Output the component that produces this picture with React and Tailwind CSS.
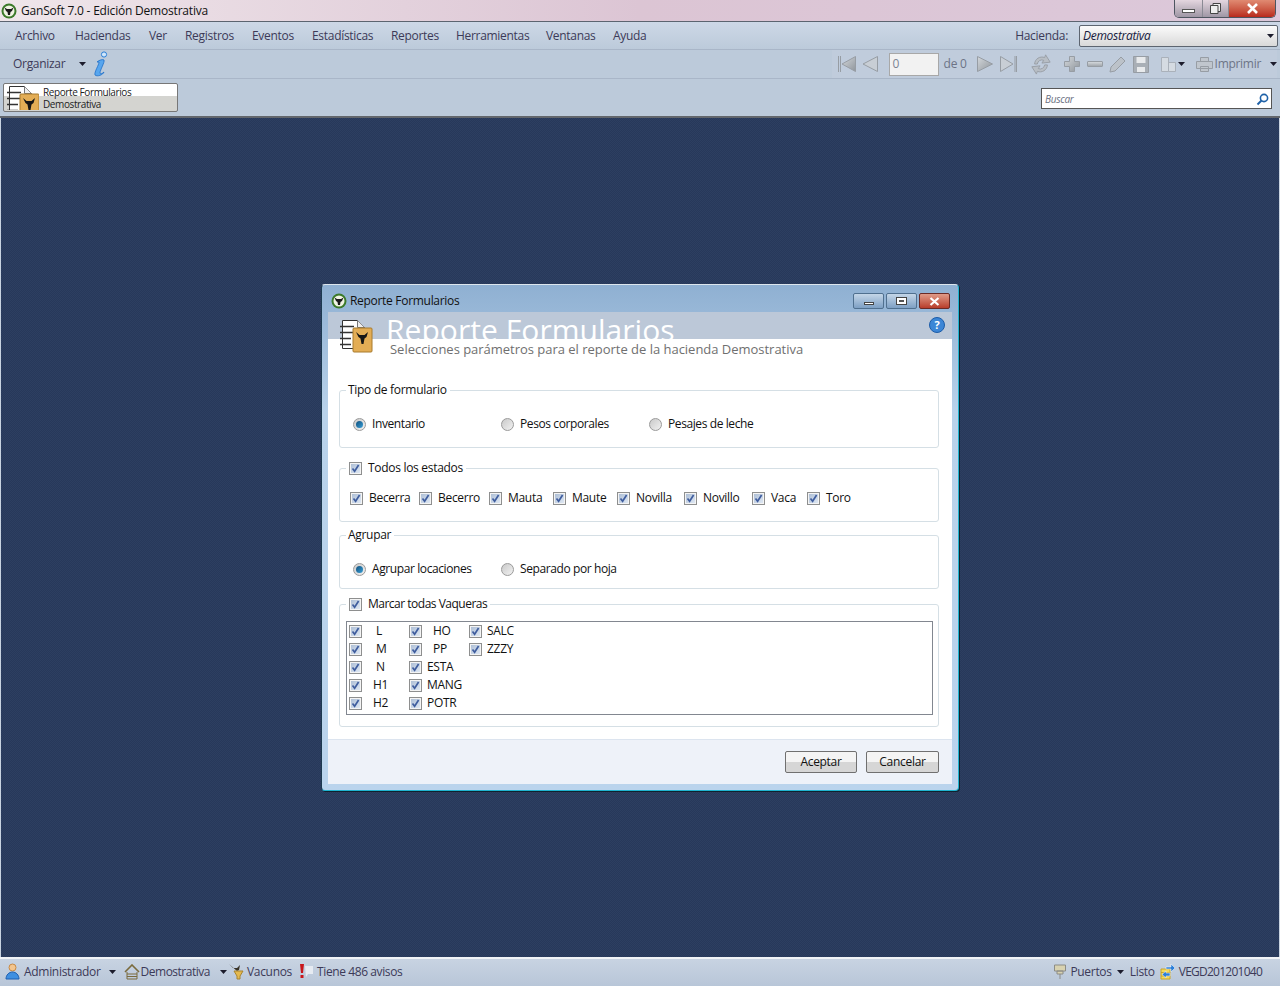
// GanSoft report dialog
import React from 'react';

const Caret = ({ className = '' }) => (
    <svg width="7" height="4" viewBox="0 0 7 4" className={className}><path d="M0 0h7L3.5 4z" fill="#1c1c2c" /></svg>
);

const Logo = ({ size = 16 }) => (
    <svg width={size} height={size} viewBox="0 0 16 16" className="shrink-0">
        <circle cx="8" cy="8" r="7.5" fill="#3c7a2a" />
        <circle cx="8" cy="8" r="5.5" fill="#f1f4e4" />
        <path d="M3.5 4.5 6 6h4l2.5-1.5L11 8l-1.5 1-.5 3H7l-.5-3L5 8z" fill="#1b1b1b" />
    </svg>
);

const ReportIcon = ({ className = '', width = 34, height = 34 }) => (
    <svg width={width} height={height} viewBox={`0 0 ${width} ${height}`} className={className}>
        <path d="M3.5 1.5h15l7 7v21h-22z" fill="#fff" stroke="#333" />
        <path d="M18.5 1.5v7h7" fill="#eee" stroke="#777" />
        <path d="M1 7.5h14M1 13.5h14M1 19.5h11M1 25.5h11" stroke="#333" strokeWidth="1.4" />
        <rect x="14" y="9" width="19" height="24" rx="1" fill="#e3ad55" stroke="#a87a2c" />
        <path d="M17 13 20.5 16h5L29 13l-1.5 5-2 1.5-1 5.5h-2l-1-5.5-2-1.5z" fill="#161616" />
    </svg>
);

const Check = () => (
    <span className="relative flex h-[13px] w-[13px] shrink-0 items-center justify-center border border-[#8e8f8f] bg-[#f4f4f4] p-px">
        <span className="flex h-full w-full items-center justify-center bg-gradient-to-br from-[#aebfd6] to-[#dfe8f3]">
            <svg width="9" height="9" viewBox="0 0 9 9"><path d="M1.5 4.5 3.6 7.2 7.6 1" fill="none" stroke="#3f5d9e" strokeWidth="1.7" /></svg>
        </span>
    </span>
);

const Radio = ({ on = false }) => (
    <span className="flex h-[13px] w-[13px] shrink-0 items-center justify-center rounded-full border border-[#9a9a9a] bg-gradient-to-br from-[#c9c9c9] to-[#f2f2f2]">
        {on && <span className="h-[7px] w-[7px] rounded-full bg-gradient-to-br from-[#0f4f7c] to-[#3aa0d8]" />}
    </span>
);

const stroke = '#979da4';

const Gray = ({ children, w = 17, h = 18, className = '' }) => (
    <svg width={w} height={h} viewBox={`0 0 ${w} ${h}`} className={`shrink-0 ${className}`}>
        <defs>
            <linearGradient id="gr" x1="0" x2="1" y1="0" y2="1">
                <stop offset="0" stopColor="#d4d8dc" />
                <stop offset="1" stopColor="#8f959b" />
            </linearGradient>
        </defs>
        {children}
    </svg>
);

const Group = ({ legend, className = '', children }) => (
    <fieldset className={`rounded-[3px] border border-[#d5dfe5] ${className}`}>
        <legend className="ml-[6px] flex items-center gap-[6px] px-[3px]">{legend}</legend>
        {children}
    </fieldset>
);

const estados = [
    ['Becerra', 'w-[69px]'], ['Becerro', 'w-[70px]'], ['Mauta', 'w-[64px]'], ['Maute', 'w-[64px]'],
    ['Novilla', 'w-[67px]'], ['Novillo', 'w-[68px]'], ['Vaca', 'w-[55px]'], ['Toro', 'w-[55px]'],
];

const vaqueras = [
    ['L', 'pl-[14px]'], ['M', 'pl-[14px]'], ['N', 'pl-[14px]'], ['H1', 'pl-[11px]'], ['H2', 'pl-[11px]'],
    ['HO', 'pl-[11px]'], ['PP', 'pl-[11px]'], ['ESTA', 'pl-[5px]'], ['MANG', 'pl-[5px]'], ['POTR', 'pl-[5px]'],
    ['SALC', 'pl-[5px]'], ['ZZZY', 'pl-[5px]'],
];

const menu = [
    ['Archivo', 'w-[60px]'], ['Haciendas', 'w-[74px]'], ['Ver', 'w-[36px]'], ['Registros', 'w-[67px]'], ['Eventos', 'w-[60px]'],
    ['Estadísticas', 'w-[79px]'], ['Reportes', 'w-[65px]'], ['Herramientas', 'w-[90px]'], ['Ventanas', 'w-[67px]'], ['Ayuda', 'w-[40px]'],
];

const WinBtn = ({ className, children }) => (
    <div className={`flex items-center justify-center ${className}`}>{children}</div>
);

export default function App() {
    return (
        <div className="flex h-[986px] w-[1280px] flex-col overflow-hidden bg-[#bccada] font-['Open_Sans',sans-serif] text-[12px] leading-4 text-[#3c3a58] tracking-[-0.3px]">
            {/* Title bar */}
            <div className="flex h-[22px] shrink-0 items-start justify-between border-b border-[#5c6470] bg-gradient-to-r from-[#efe6ea] via-[#dcc5d4] to-[#dcc8da] pl-px pr-[4px]">
                <div className="flex h-[21px] items-center gap-[4px] text-[12px] tracking-[-0.2px] text-[#111]">
                    <Logo />
                    <span>GanSoft 7.0 - Edición Demostrativa</span>
                </div>
                <div className="flex h-[18px] overflow-hidden rounded-b-[5px] border border-t-0 border-[#4d5560]">
                    <WinBtn className="w-[28px] border-r border-[#8a8a94] bg-gradient-to-b from-[#e4d6df] to-[#9f97a5]">
                        <span className="mt-[5px] h-[4px] w-[13px] border border-[#555] bg-white" />
                    </WinBtn>
                    <WinBtn className="w-[26px] border-r border-[#8a8a94] bg-gradient-to-b from-[#e4d6df] to-[#9f97a5]">
                        <svg width="11" height="11" viewBox="0 0 11 11"><path d="M3 2.5V.5h7.5v8H8M.5 2.5h7.5v8H.5z" fill="#eee" stroke="#444" /></svg>
                    </WinBtn>
                    <WinBtn className="w-[46px] bg-gradient-to-b from-[#e08a72] to-[#b8271b]">
                        <svg width="13" height="11" viewBox="0 0 13 11"><path d="M2 1l9 9M11 1l-9 9" stroke="#fff" strokeWidth="2.6" /></svg>
                    </WinBtn>
                </div>
            </div>

            {/* Menu */}
            <div className="flex h-[28px] shrink-0 items-center justify-between border-b border-[#a9b6c8] bg-gradient-to-b from-[#cdd8e7] to-[#bccada] pl-[15px] pr-[2px]">
                <div className="flex items-center">
                    {menu.map(([m, w]) => <span key={m} className={w}>{m}</span>)}
                </div>
                <div className="flex items-center gap-[11px]">
                    <span>Hacienda:</span>
                    <div className="flex h-[22px] w-[199px] items-center justify-between rounded-[2px] border border-[#5d6570] bg-gradient-to-b from-[#fbfbfb] to-[#d9d9d9] pl-[3px] pr-[3px] italic text-[#161a40]">
                        <span>Demostrativa</span>
                        <Caret />
                    </div>
                </div>
            </div>

            {/* Toolbar */}
            <div className="flex h-[29px] shrink-0 items-center justify-between border-b border-[#a9b6c8] bg-[#bccada] pl-[13px] pr-[3px]">
                <div className="flex items-center">
                    <span>Organizar</span>
                    <Caret className="ml-[14px]" />
                    <svg width="16" height="26" viewBox="0 0 16 26" className="ml-[7px]">
                        <circle cx="11" cy="3.5" r="2.6" fill="#cfe6fb" stroke="#2b7fd6" />
                        <path d="M4 11c2-2 6-3 7-2 1 2-4 10-4 13 0 1 2 1 4-1-1 3-7 5-9 3-1-3 4-10 4-13-1 0-2 0-2 0z" fill="#58a6ee" stroke="#1e6fc8" strokeWidth=".8" />
                    </svg>
                </div>
                <div className="flex h-full items-center bg-[#c0ccdc] pl-[6px]">
                    <Gray w={18}><path d="M.5 1v16M2.5 1v16" stroke={stroke} /><path d="M17.5 1.5v15L4 9z" fill="url(#gr)" stroke={stroke} /></Gray>
                    <Gray w={16} className="ml-[6px]"><path d="M15.5 1.5v15L1 9z" fill="#c8ced5" stroke={stroke} /></Gray>
                    <div className="ml-[11px] flex h-[23px] w-[50px] items-center border border-[#a8a8a8] bg-[#f2f2f2] pl-[3px] text-[#7c8494]">0</div>
                    <span className="ml-[5px] w-[33px] text-[#6d7486]">de 0</span>
                    <Gray w={16}><path d="M.5 1.5v15L15.5 9z" fill="url(#gr)" stroke={stroke} /></Gray>
                    <Gray w={17} className="ml-[7px]"><path d="M.5 1.5v15L13 9z" fill="#c8ced5" stroke={stroke} /><path d="M15 1v16M16.5 1v16" stroke={stroke} /></Gray>
                    <svg width="22" height="24" viewBox="0 0 24 24" className="ml-[13px]"><path d="M5 12a8 8 0 0 1 11-7l1-3 5 8-9 1 2-3a5 5 0 0 0-7 4zM19 13a8 8 0 0 1-11 7l-1 3-5-8 9-1-2 3a5 5 0 0 0 7-4z" fill="#b8bec5" stroke={stroke} /></svg>
                    <Gray w={16} h={16} className="ml-[12px]"><path d="M5.5.5h5v5h5v5h-5v5h-5v-5h-5v-5h5z" fill="url(#gr)" stroke={stroke} /></Gray>
                    <span className="ml-[7px] h-[6px] w-[16px] rounded-[1px] border border-[#979da4] bg-gradient-to-b from-[#d4d8dc] to-[#a3a8ad]" />
                    <svg width="17" height="17" viewBox="0 0 17 17" className="ml-[6px]"><path d="M1 16l1-5L12 1l4 4L6 15z" fill="#bcc2c9" stroke={stroke} /></svg>
                    <svg width="16" height="17" viewBox="0 0 16 17" className="ml-[7px]"><path d="M.5.5h15v16H.5z" fill="#a9afb6" stroke={stroke} /><path d="M3.5 1h9v6h-9zM4 11h8v5H4z" fill="#e8eaec" /></svg>
                    <svg width="15" height="15" viewBox="0 0 15 15" className="ml-[12px]"><path d="M.5.5h7v14h-7zM7.5 5.5h7v9h-7z" fill="#d5dbe2" stroke="#aab1ba" /></svg>
                    <Caret className="ml-[2px] mr-[8px]" />
                    <svg width="17" height="15" viewBox="0 0 17 15" className="ml-[3px]"><path d="M4.5.5h8v4h-8zM.5 4.5h16v7h-16zM4.5 9.5h8v5h-8z" fill="#c0c6cd" stroke={stroke} /></svg>
                    <span className="ml-[2px] text-[#6d7486]">Imprimir</span>
                    <Caret className="ml-[9px]" />
                </div>
            </div>

            {/* Tabs + search */}
            <div className="flex h-[39px] shrink-0 items-start justify-between border-b-2 border-[#62666c] bg-[#bccada] pl-[3px] pr-[8px] pt-[4px]">
                <div className="flex h-[29px] w-[175px] items-center gap-[4px] rounded-[2px] border border-[#777] bg-gradient-to-b from-white from-45% to-[#d4d4d0] to-45% pl-[2px] text-[10px] leading-[12px] tracking-[-0.4px] text-[#222]">
                    <ReportIcon width={33} height={25} className="shrink-0" />
                    <span>Reporte Formularios<br />Demostrativa</span>
                </div>
                <div className="mt-[5px] flex h-[21px] w-[231px] items-center justify-between border border-[#555] bg-white pl-[3px] pr-[2px] pt-[1px] text-[10px] italic text-[#6b7182]">
                    <span>Buscar</span>
                    <svg width="13" height="13" viewBox="0 0 13 13"><circle cx="8" cy="5" r="3.6" fill="none" stroke="#1f62a8" strokeWidth="1.6" /><path d="M5.5 7.5 1.5 11.5" stroke="#1f62a8" strokeWidth="2" /></svg>
                </div>
            </div>

            {/* Desktop */}
            <div className="flex flex-1 items-center justify-center border-x border-[#c8d3e0] bg-[repeating-conic-gradient(#2d3f61_0_25%,#27385a_0_50%)] bg-[length:2px_2px] text-[#111]">
                <div className="flex h-[507px] w-[638px] flex-col rounded-[4px] border border-b-[#20b4d0] border-l-[#1d3a50] border-r-[#20b4d0] border-t-[#dde6ee] bg-gradient-to-b from-[#8fb0d2] via-[#b8d2ea] via-25% to-[#bad4ed] px-[6px] pb-[6px] shadow-[1px_1px_0_#10222e]">
                    {/* Dialog title */}
                    <div className="-mx-[6px] flex h-[27px] shrink-0 items-center justify-between pl-[9px] pr-[8px] pt-[5px]">
                        <div className="flex items-center gap-[3px]">
                            <Logo />
                            <span>Reporte Formularios</span>
                        </div>
                        <div className="flex gap-[2px]">
                            <WinBtn className="h-[16px] w-[31px] rounded-[2px] border border-[#50708f] bg-gradient-to-b from-[#c4d6e8] to-[#7ea0c4]"><span className="mt-[4px] h-[3px] w-[10px] border border-[#444] bg-white" /></WinBtn>
                            <WinBtn className="h-[16px] w-[31px] rounded-[2px] border border-[#50708f] bg-gradient-to-b from-[#c4d6e8] to-[#7ea0c4]"><span className="flex h-[8px] w-[11px] items-center justify-center border border-[#444] bg-white"><span className="h-[2px] w-[5px] bg-[#555]" /></span></WinBtn>
                            <WinBtn className="h-[16px] w-[31px] rounded-[2px] border border-[#6b2a25] bg-gradient-to-b from-[#df9a88] to-[#b83c2a]"><svg width="11" height="9" viewBox="0 0 11 9"><path d="M1.5 1l8 7M9.5 1l-8 7" stroke="#fff" strokeWidth="2.2" /></svg></WinBtn>
                        </div>
                    </div>

                    {/* Dialog body */}
                    <div className="relative flex flex-1 flex-col bg-white">
                        <div className="h-[27px] shrink-0 overflow-hidden bg-[#bcc8d8] pl-[58px] text-[30px] leading-[35px] tracking-[0.05px] text-white">Reporte Formularios</div>
                        <ReportIcon className="absolute left-[11px] top-[7px]" />
                        <svg width="16" height="16" viewBox="0 0 16 16" className="absolute right-[7px] top-[5px]"><circle cx="8" cy="8" r="7.5" fill="#3c86d6" stroke="#1c5ca8" /><text x="8" y="12" textAnchor="middle" fontSize="11" fontWeight="700" fill="#fff" fontFamily="Open Sans">?</text></svg>
                        <div className="ml-[62px] mt-[1px] h-[25px] text-[13px] leading-[18px] tracking-[-0.02px] text-[#6f6f6f]">Selecciones parámetros para el reporte de la hacienda Demostrativa</div>

                        <div className="flex flex-col pl-[11px] pr-[13px] pt-[17px]">
                            <Group legend={<span className="-ml-px">Tipo de formulario</span>} className="h-[66px]">
                                <div className="flex pl-[13px] pt-[18px]">
                                    {['Inventario', 'Pesos corporales', 'Pesajes de leche'].map((t, i) => (
                                        <div key={t} className="flex w-[148px] items-center gap-[6px] tracking-[-0.4px]"><Radio on={i === 0} /><span>{t}</span></div>
                                    ))}
                                </div>
                            </Group>
                            <Group legend={<><Check /><span>Todos los estados</span></>} className="mt-[12px] h-[62px]">
                                <div className="flex pl-[10px] pt-[14px]">
                                    {estados.map(([t, w]) => (
                                        <div key={t} className={`flex items-center gap-[6px] ${w}`}><Check /><span>{t}</span></div>
                                    ))}
                                </div>
                            </Group>
                            <Group legend={<span className="-ml-px">Agrupar</span>} className="mt-[5px] h-[62px]">
                                <div className="flex pl-[13px] pt-[18px]">
                                    {['Agrupar locaciones', 'Separado por hoja'].map((t, i) => (
                                        <div key={t} className="flex w-[148px] items-center gap-[6px] tracking-[-0.4px]"><Radio on={i === 0} /><span>{t}</span></div>
                                    ))}
                                </div>
                            </Group>
                            <Group legend={<><Check /><span className="tracking-[-0.5px]">Marcar todas Vaqueras</span></>} className="mt-[7px] h-[131px]">
                                <div className="ml-[6px] mr-[5px] mt-[9px] grid h-[94px] grid-flow-col grid-rows-[repeat(5,18px)] content-start justify-start border border-[#828790] pl-[2px]">
                                    {vaqueras.map(([t, pad]) => (
                                        <div key={t} className="flex h-[18px] w-[60px] items-center"><Check /><span className={pad}>{t}</span></div>
                                    ))}
                                </div>
                            </Group>
                        </div>

                        {/* Footer */}
                        <div className="mt-auto flex h-[45px] shrink-0 items-center justify-end gap-[9px] border-t border-[#dce4ef] bg-[#eef2f9] pr-[13px]">
                            <button className="h-[22px] w-[72px] rounded-[2px] border border-[#707070] bg-gradient-to-b from-[#f4f4f4] from-50% to-[#d6d6d6] to-50%">Aceptar</button>
                            <button className="h-[22px] w-[73px] rounded-[2px] border border-[#707070] bg-gradient-to-b from-[#f4f4f4] from-50% to-[#d6d6d6] to-50%">Cancelar</button>
                        </div>
                    </div>
                </div>
            </div>

            {/* Status bar */}
            <div className="flex h-[29px] shrink-0 items-center justify-between border-t-2 border-[#f0f3f7] bg-gradient-to-b from-[#c8d3e2] to-[#b8c6d8] pb-[2px] pl-[5px] pr-[18px]">
                <div className="flex items-center">
                    <svg width="15" height="17" viewBox="0 0 15 17"><circle cx="7.5" cy="4.5" r="3.5" fill="#f3c58e" stroke="#c98a44" /><path d="M1 16c0-4 3-7 6.5-7s6.5 3 6.5 7z" fill="#3f8fe0" stroke="#1f5fb0" /></svg>
                    <span className="ml-[4px]">Administrador</span>
                    <Caret className="ml-[8px]" />
                    <svg width="16" height="16" viewBox="0 0 16 16" className="ml-[8px]"><path d="M1 8 8 1l7 7" fill="none" stroke="#7a6a3c" strokeWidth="1.6" /><path d="M3 8v7M13 8v7M3 10h10M3 12.5h10M3 15h10" stroke="#7a6a3c" /></svg>
                    <span className="ml-[1px] tracking-[-0.5px]">Demostrativa</span>
                    <Caret className="ml-[10px]" />
                    <svg width="17" height="17" viewBox="0 0 17 17" className="ml-[1px]"><path d="M1 1 5 5h4l3-3-1 5-2 1z" fill="#3a3428" /><path d="M6 8h9l-3 5v3H9v-3z" fill="#e4b94e" stroke="#a8842e" /></svg>
                    <span className="ml-[2px]">Vacunos</span>
                    <svg width="16" height="17" viewBox="0 0 16 17" className="ml-[6px]"><path d="M7 3h8v8H10l-2 3z" fill="#e6ebf2" /><path d="M2 1h4L5 10H3zM2.5 12h3v3h-3z" fill="#c8171c" /></svg>
                    <span className="ml-[3px] tracking-[-0.4px]">Tiene 486 avisos</span>
                </div>
                <div className="flex items-center">
                    <svg width="14" height="17" viewBox="0 0 14 17"><path d="M1.5 2h11v6h-11zM4 8h6v3H4zM7 11v5" fill="#d8d2b0" stroke="#8c8c86" /></svg>
                    <span className="ml-[3px]">Puertos</span>
                    <Caret className="ml-[5px]" />
                    <span className="ml-[6px]">Listo</span>
                    <svg width="16" height="17" viewBox="0 0 16 17" className="ml-[5px]"><path d="M1 6h9v10H1z" fill="#f2d95a" stroke="#c8a52a" /><path d="M1 9.5h9M1 13h9" stroke="#c8a52a" /><path d="M6 4h5V1l4 4-4 4V6H6zM10 10H6V8l-4 3.5L6 15v-2h4z" fill="#2c7fd8" stroke="#fff" strokeWidth=".5" /></svg>
                    <span className="ml-[3px] tracking-[-0.75px]">VEGD201201040</span>
                </div>
            </div>
        </div>
    );
}
